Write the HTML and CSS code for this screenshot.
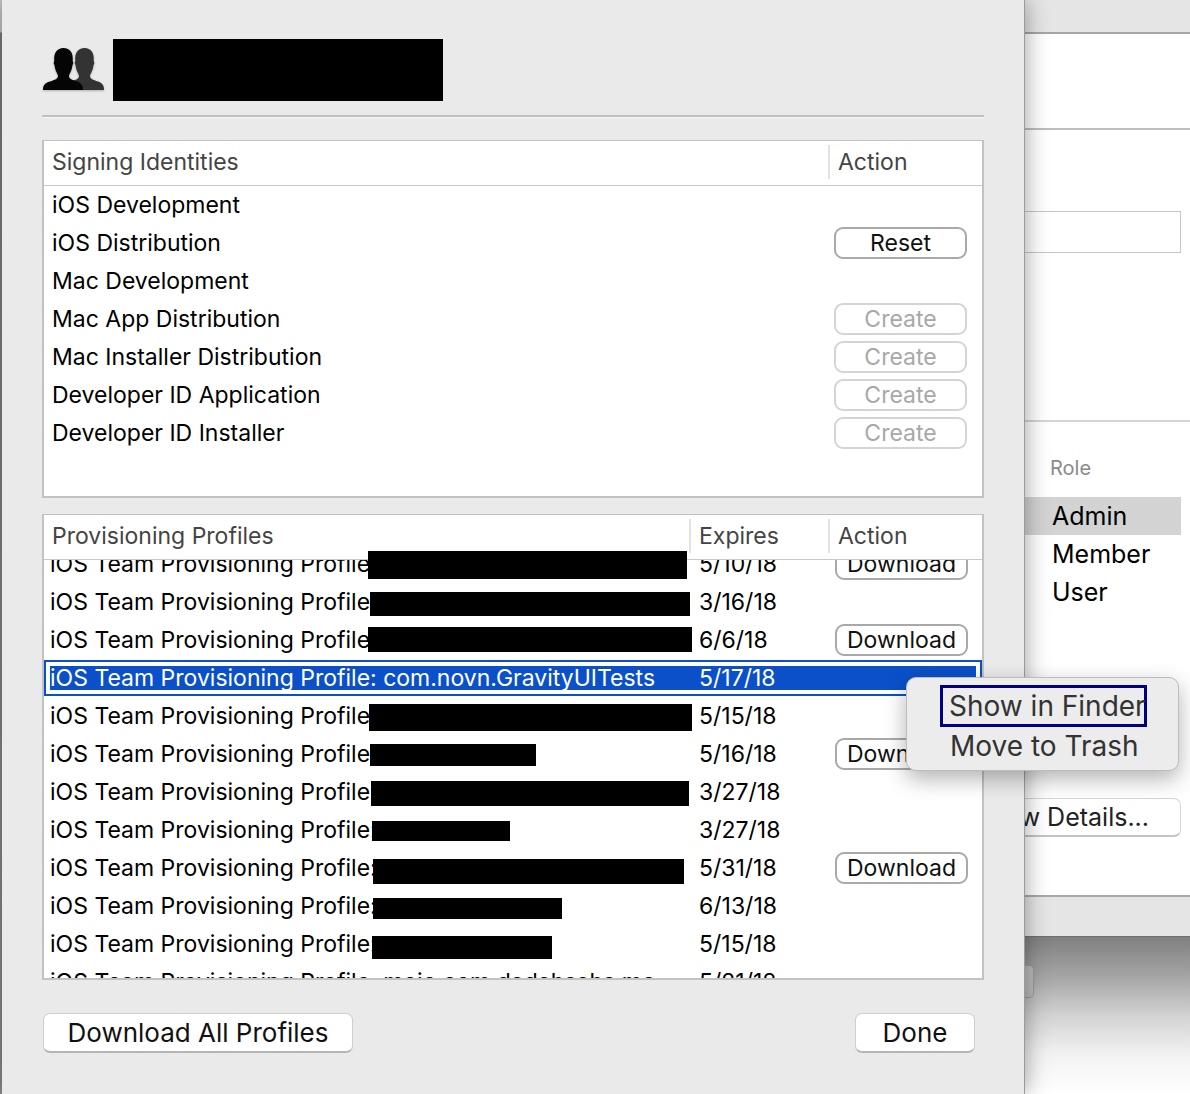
FILE: index.html
```html
<!DOCTYPE html>
<html lang="en">
<head>
<meta charset="utf-8">
<title>Accounts</title>
<link rel="stylesheet" href="styles.css">
</head>
<body>
<div class="desktop">
  <div class="edge"></div>
  <main class="sheet">
    <header class="account">
      <svg class="people" viewBox="0 0 62 44" aria-hidden="true">
        <path class="back" d="M22 43C22 38 24 36 29 34.5C34 33 37 31.5 37 29C37 27 34 24 33.5 18C32.5 17 32.500 15 33.300 14C32.500 6 36 1 42.500 1C49 1 52.500 6 51.700 14C52.500 15 52.500 17 51.500 18C51 24 48 27 48 29C48 31.500 51 33 56 34.500C60 36 62 38 62 43Z"/>
        <path d="M1 43C1 38 3 36 8 34.500C13 33 16 31.500 16 29C16 27 13 24 12.500 18C11.500 17 11.500 15 12.300 14C11.500 6 15 1 21.500 1C28 1 31.500 6 30.700 14C31.500 15 31.500 17 30.500 18C30 24 27 27 27 29C27 31.500 30 33 35 34.500C39 36 41 38 41 43Z"/>
      </svg>
      <div class="account-name"></div>
    </header>
    <div class="rule"></div>

    <section class="table identities">
      <div class="head head-two">
        <div class="cell first">Signing Identities</div>
        <div class="cell">Action</div>
      </div>
      <div class="id-row"><span>iOS Development</span></div>
      <div class="id-row"><span>iOS Distribution</span><button class="btn">Reset</button></div>
      <div class="id-row"><span>Mac Development</span></div>
      <div class="id-row"><span>Mac App Distribution</span><button class="btn off">Create</button></div>
      <div class="id-row"><span>Mac Installer Distribution</span><button class="btn off">Create</button></div>
      <div class="id-row"><span>Developer ID Application</span><button class="btn off">Create</button></div>
      <div class="id-row"><span>Developer ID Installer</span><button class="btn off">Create</button></div>
    </section>

    <section class="table profiles">
      <div class="head head-three">
        <div class="cell first">Provisioning Profiles</div>
        <div class="cell">Expires</div>
        <div class="cell">Action</div>
      </div>
      <div class="list">
        <div class="row"><span>iOS Team Provisioning Profile:</span><span>5/10/18</span><button class="btn">Download</button></div>
        <div class="row"><span>iOS Team Provisioning Profile:</span><span>3/16/18</span></div>
        <div class="row"><span>iOS Team Provisioning Profile:</span><span>6/6/18</span><button class="btn">Download</button></div>
        <div class="row selected"><span>iOS Team Provisioning Profile: com.novn.GravityUITests</span><span>5/17/18</span></div>
        <div class="row"><span>iOS Team Provisioning Profile:</span><span>5/15/18</span></div>
        <div class="row"><span>iOS Team Provisioning Profile:</span><span>5/16/18</span><button class="btn">Download</button></div>
        <div class="row"><span>iOS Team Provisioning Profile:</span><span>3/27/18</span></div>
        <div class="row"><span>iOS Team Provisioning Profile:</span><span>3/27/18</span></div>
        <div class="row"><span>iOS Team Provisioning Profile:</span><span>5/31/18</span><button class="btn">Download</button></div>
        <div class="row"><span>iOS Team Provisioning Profile:</span><span>6/13/18</span></div>
        <div class="row"><span>iOS Team Provisioning Profile:</span><span>5/15/18</span></div>
        <div class="row"><span>iOS Team Provisioning Profile: mojo.com.dadahsahs.me</span><span>5/21/18</span></div>
      </div>
      <div class="redact r1"></div>
      <div class="redact r2"></div>
      <div class="redact r3"></div>
      <div class="redact r5"></div>
      <div class="redact r6"></div>
      <div class="redact r7"></div>
      <div class="redact r8"></div>
      <div class="redact r9"></div>
      <div class="redact r10"></div>
      <div class="redact r11"></div>
    </section>

    <footer class="actions">
      <button class="big-btn wide">Download All Profiles</button>
      <button class="big-btn done">Done</button>
    </footer>
  </main>

  <aside class="window">
    <div class="titlebar"></div>
    <div class="pane-top"></div>
    <div class="pane-field"><div class="field"></div></div>
    <div class="pane-role">
      <div class="role-title">Role</div>
      <div class="role active">Admin</div>
      <div class="role">Member</div>
      <div class="role">User</div>
      <div class="details-wrap"><button class="details">View Details...</button></div>
    </div>
    <div class="window-foot"></div>
    <div class="backdrop"><div class="stepper"></div></div>
  </aside>

  <div class="menu">
    <div class="menu-item focused">Show in Finder</div>
    <div class="menu-item">Move to Trash</div>
  </div>
</div>
</body>
</html>
```
FILE: styles.css
```css
* { box-sizing: border-box; }
html, body { margin: 0; padding: 0; }
body { font-family: Inter, "Noto Sans", sans-serif; color: #000; background: #fff; overflow: hidden; }
button { font-family: inherit; }

.desktop { position: relative; display: flex; width: 1190px; height: 1094px; overflow: hidden; }
.edge { flex: 0 0 2px; background: linear-gradient(#c8c8c8 0, #c8c8c8 32px, #7d7d7d 33px, #8d8d8d 100%); }

.sheet {
  position: relative; z-index: 2;
  flex: 0 0 1023px; display: flex; flex-direction: column;
  padding: 39px 40px 0;
  background: #eaeaea;
  border-right: 1px solid #9b9b9b;
  box-shadow: 0 0 22px rgba(0, 0, 0, .38);
}

.account { display: flex; align-items: flex-start; height: 62px; }
.people { width: 62px; height: 44px; margin-top: 8px; fill: #050505; filter: drop-shadow(0 1px 1px rgba(0, 0, 0, .25)); }
.people .back { fill: #333; }
.account-name { width: 330px; height: 62px; margin-left: 9px; background: #000; }
.rule { height: 3px; margin-top: 14px; border-top: 2px solid #bfbfbf; border-bottom: 1px solid #f6f6f6; }

.table { position: relative; background: #fff; border: 2px solid #c2c2c2; border-top-width: 1px; font-size: 23px; line-height: 38px; }
.identities { height: 358px; margin-top: 22px; }
.profiles { height: 466px; margin-top: 16px; }

.head { display: grid; height: 45px; border-bottom: 1px solid #c9c9c9; color: #444; }
.head-two { grid-template-columns: 784px 1fr; }
.head-three { grid-template-columns: 645px 139px 1fr; }
.cell { height: 34px; margin-top: 4px; padding-left: 8px; line-height: 34px; border-left: 2px solid #e2e2e2; }
.cell.first { padding-left: 8px; border-left: 0; }

.id-row { display: flex; align-items: center; justify-content: space-between; height: 38px; padding: 0 15px 0 8px; }
.btn {
  flex: none; width: 133px; height: 32px; padding: 0;
  background: #fff; border: 2px solid #a9a9a9; border-radius: 9px;
  color: #111; font-size: 23px; line-height: 28px;
}
.btn.off { border-color: #d4d4d4; color: #a8a8a8; }

.list { height: 418px; overflow: hidden; }
.row { display: grid; grid-template-columns: 649px 136px 133px; align-items: center; height: 38px; padding-left: 6px; white-space: nowrap; }
.row:first-child { margin-top: -15px; }
.row.selected {
  height: 36px; margin: 1px 0; padding: 4px;
  border: 2px solid #0b50c8; background: #0b50c8; background-clip: content-box;
  color: #fff; line-height: 24px;
}

.redact { position: absolute; background: #000; }
.r1 { left: 324px; top: 36px; width: 319px; height: 28px; }
.r2 { left: 326px; top: 77px; width: 320px; height: 24px; }
.r3 { left: 324px; top: 112px; width: 324px; height: 25px; }
.r5 { left: 325px; top: 189px; width: 323px; height: 27px; }
.r6 { left: 326px; top: 229px; width: 166px; height: 22px; }
.r7 { left: 327px; top: 266px; width: 318px; height: 25px; }
.r8 { left: 328px; top: 306px; width: 138px; height: 20px; }
.r9 { left: 329px; top: 344px; width: 311px; height: 25px; }
.r10 { left: 329px; top: 383px; width: 189px; height: 21px; }
.r11 { left: 328px; top: 421px; width: 180px; height: 23px; }

.actions { display: flex; justify-content: space-between; margin: 33px 9px 0 1px; }
.big-btn {
  height: 40px; padding: 0; background: #fff; color: #111;
  border: 1px solid #cfcfcf; border-bottom: 2px solid #b5b5b5; border-radius: 7px;
  font-size: 26px; line-height: 36px;
}
.wide { width: 310px; }
.done { width: 120px; }

.window { position: relative; flex: 1; min-width: 0; display: flex; flex-direction: column; background: #fff; overflow: hidden; }
.titlebar { flex: none; height: 34px; background: #e5e5e5; border-bottom: 2px solid #a5a5a5; }
.pane-top { flex: none; height: 96px; border-bottom: 2px solid #bdbdbd; }
.pane-field { flex: none; height: 292px; padding: 81px 9px 0 0; border-bottom: 2px solid #d4d4d4; }
.field { height: 42px; border: 1px solid #c6c6c6; border-left: 0; }
.pane-role { flex: none; height: 473px; padding: 32px 9px 0 0; }
.role-title { height: 43px; padding-left: 25px; line-height: 28px; font-size: 20px; color: #8a8a8a; }
.role { height: 38px; padding-left: 27px; font-size: 25px; line-height: 38px; }
.role.active { background: #d3d3d3; }
.details-wrap { display: flex; justify-content: flex-end; margin-top: 187px; }
.details {
  flex: none; width: 220px; height: 39px; padding: 0 31px 0 0; text-align: right;
  background: #fff; color: #222; font-size: 25px; line-height: 36px;
  border: 1px solid #d6d6d6; border-bottom: 2px solid #c4c4c4; border-radius: 7px;
}
.window-foot { flex: none; height: 42px; background: #e5e5e5; border-top: 2px solid #a8a8a8; border-bottom: 1px solid #6e6e6e; }
.backdrop { flex: 1; padding-top: 28px; background: linear-gradient(#808080 0, #a4a4a4 25%, #d2d2d2 50%, #f2f2f2 75%, #fff 100%); }
.stepper { width: 10px; height: 33px; margin-left: -1px; border: 1px solid #9a9a9a; border-left: 0; border-radius: 0 5px 5px 0; background: #bbb; }

.menu {
  position: absolute; z-index: 3; left: 906px; top: 677px; width: 273px; height: 94px;
  padding: 7px 0 0 33px;
  background: #ececec; border: 1px solid #bdbdbd; border-radius: 10px;
  box-shadow: 0 8px 22px rgba(0, 0, 0, .3);
  color: #333; font-size: 28px;
}
.menu-item { height: 39px; padding-left: 10px; line-height: 38px; white-space: nowrap; }
.menu-item.focused { width: 207px; height: 42px; padding-left: 6px; line-height: 36px; border: 3px solid #000080; }
```
